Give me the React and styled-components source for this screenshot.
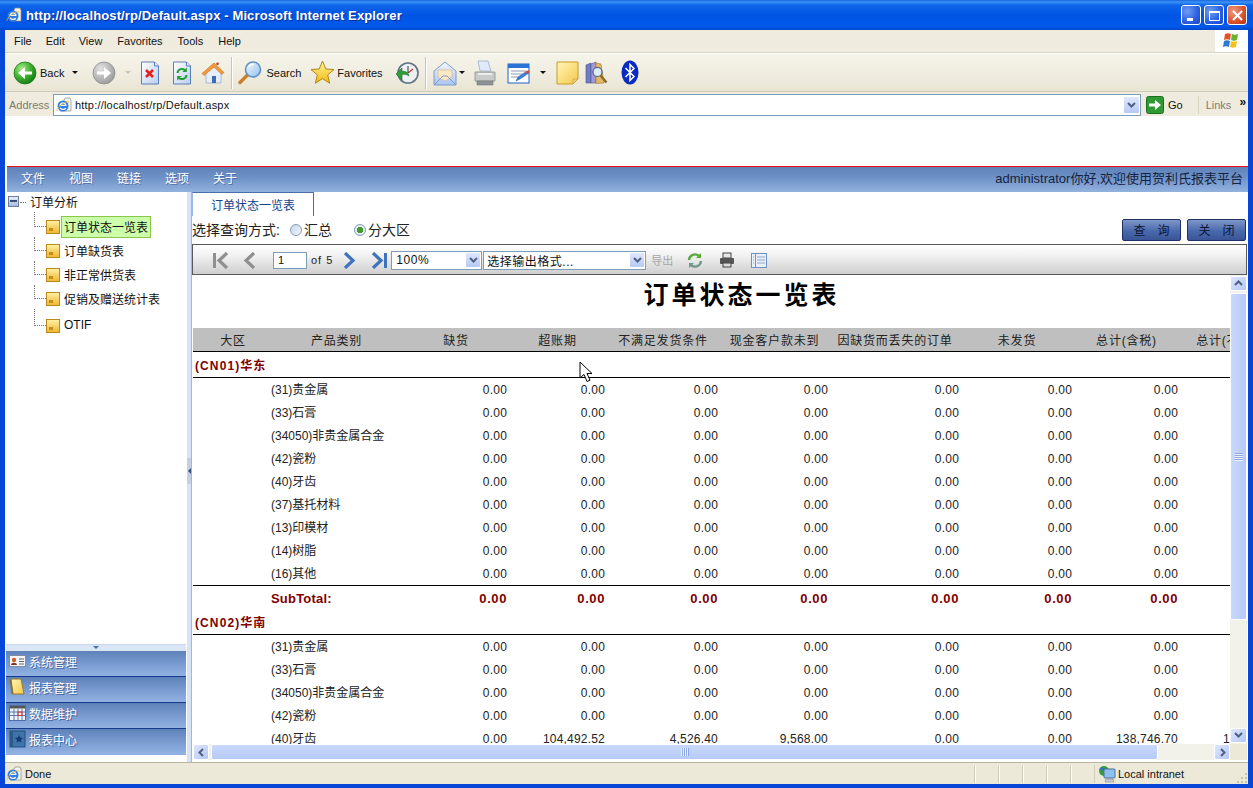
import React from "react";
import styled, { createGlobalStyle } from "styled-components";

const UI_FONT = `"Liberation Sans", "Noto Sans CJK SC", sans-serif`;

const GlobalStyle = createGlobalStyle`
  html, body {
    margin: 0;
    padding: 0;
    overflow: hidden;
    background: #0846d8;
    font-family: ${UI_FONT};
  }
`;

const Window = styled.div`
  width: 1253px;
  height: 788px;
  display: flex;
  flex-direction: column;
  background: #0846d8;
  position: relative;
  overflow: hidden;
`;

const TitleBar = styled.div`
  height: 30px;
  flex: none;
  display: flex;
  align-items: center;
  padding: 0 6px 0 6px;
  background: linear-gradient(#1a62dc 0, #3b93f8 2px, #0f66ea 5px, #0054e3 50%, #0058ea 88%, #0048c8 100%);
`;

const TitleText = styled.div`
  margin-left: 4px;
  flex: 1;
  color: #fff;
  font-size: 13px;
  font-weight: 700;
  letter-spacing: 0.12px;
  text-shadow: 1px 1px 0 #0b2f96;
`;

const CaptionButton = styled.div`
  width: 18px;
  height: 18px;
  margin-left: 3px;
  border: 1px solid #fff;
  border-radius: 3px;
  box-sizing: content-box;
  background: ${(p) =>
    p.$close
      ? "radial-gradient(circle at 30% 30%, #ee9a80, #d8512c 60%, #b83212)"
      : "radial-gradient(circle at 30% 30%, #6f9cf2, #2a5fe0 60%, #1a48c8)"};
  display: flex;
  align-items: center;
  justify-content: center;
  position: relative;
`;

const Chrome = styled.div`
  flex: 1;
  min-height: 0;
  margin: 0 5px 4px;
  display: flex;
  flex-direction: column;
  background: #ece9d8;
`;

const MenuBar = styled.div`
  height: 23px;
  flex: none;
  display: flex;
  align-items: center;
  background: #efecdf;
  border-bottom: 1px solid #d8d4c0;
  box-sizing: border-box;
`;

const MenuItem = styled.span`
  font-size: 11px;
  color: #111;
  margin-left: ${(p) => p.$ml}px;
`;

const FlagBox = styled.div`
  margin-left: auto;
  width: 33px;
  height: 22px;
  background: #fff;
  display: flex;
  align-items: center;
  justify-content: center;
`;

const ToolBar = styled.div`
  height: 39px;
  flex: none;
  display: flex;
  align-items: center;
  padding-left: 8px;
  box-sizing: border-box;
  background: linear-gradient(#f6f4ea, #efecdf 60%, #e8e5d4);
  border-top: 1px solid #fff;
  border-bottom: 1px solid #cfcbb6;
`;

const ToolIcon = styled.span`
  display: inline-flex;
  margin-left: ${(p) => p.$ml || 0}px;
  flex: none;
`;

const ToolLabel = styled.span`
  font-size: 11px;
  color: #111;
  margin-left: ${(p) => p.$ml || 3}px;
  flex: none;
`;

const Caret = styled.span`
  width: 0;
  height: 0;
  flex: none;
  margin-left: ${(p) => p.$ml || 3}px;
  border-left: 3px solid transparent;
  border-right: 3px solid transparent;
  border-top: 3px solid ${(p) => (p.$dim ? "#c4c1b0" : "#111")};
`;

const ToolSeparator = styled.span`
  width: 1px;
  height: 32px;
  flex: none;
  background: #c9c5b0;
  box-shadow: 1px 0 0 #fff;
  margin-left: ${(p) => p.$ml || 0}px;
`;

const AddressBar = styled.div`
  height: 24px;
  flex: none;
  display: flex;
  align-items: flex-end;
  background: #efecdf;
  box-sizing: border-box;
`;

const AddressLabel = styled.span`
  font-size: 11px;
  color: #7d7b6e;
  margin-left: 4px;
  width: 44px;
  flex: none;
  align-self: center;
  padding-top: 1px;
`;

const AddressInput = styled.div`
  width: 1088px;
  height: 22px;
  flex: none;
  box-sizing: border-box;
  border: 1px solid #7f9db9;
  background: #fff;
  display: flex;
  align-items: center;
  padding-left: 2px;
  font-size: 11px;
  letter-spacing: 0.2px;
  color: #111;
  gap: 3px;
`;

const ComboButton = styled.span`
  margin-left: auto;
  width: ${(p) => p.$w || 17}px;
  height: ${(p) => p.$h || 18}px;
  flex: none;
  background: linear-gradient(#dfe8fb, #b6c9f4);
  border: 1px solid #fff;
  box-sizing: border-box;
  border-radius: 2px;
  display: flex;
  align-items: center;
  justify-content: center;
`;

const AddressGo = styled.span`
  display: flex;
  align-items: center;
  height: 22px;
  flex: none;
  margin-left: 5px;
`;

const GoLabel = styled.span`
  font-size: 11px;
  color: #111;
  margin-left: 4px;
`;

const LinksLabel = styled.span`
  font-size: 11px;
  color: #7d7b6e;
  margin-left: 15px;
  padding-left: 7px;
  border-left: 1px solid #d8d4c0;
  line-height: 18px;
`;

const Chevrons = styled.span`
  font-size: 12px;
  font-weight: 700;
  color: #111;
  margin: -6px 0 0 8px;
`;

const Page = styled.div`
  flex: 1;
  min-height: 0;
  display: flex;
  flex-direction: column;
  background: #fff;
`;

const Banner = styled.div`
  height: 51px;
  flex: none;
  background: #fff;
  border-bottom: 1px solid #f01010;
  margin-left: 2px;
  box-sizing: border-box;
`;

const NavBar = styled.div`
  height: 25px;
  flex: none;
  margin-left: 2px;
  padding: 0 5px 5px 14px;
  box-sizing: border-box;
  display: flex;
  align-items: center;
  gap: 24px;
  background: linear-gradient(#5f82b9, #6f93c8 45%, #92b2de);
`;

const NavItem = styled.span`
  color: #fff;
  font-size: 12px;
  text-shadow: 1px 1px 0 #4f6fa4;
`;

const Welcome = styled.span`
  margin-left: auto;
  font-size: 13px;
  color: #16233f;
`;

const Main = styled.div`
  flex: 1;
  min-height: 0;
  display: flex;
`;

const Sidebar = styled.div`
  width: 182px;
  flex: none;
  padding: 0 1px;
  box-sizing: border-box;
  display: flex;
  flex-direction: column;
  padding-bottom: 7px;
`;

const Tree = styled.div`
  flex: 1;
  min-height: 0;
`;

const TreeRoot = styled.div`
  height: 20px;
  display: flex;
  align-items: center;
  padding-left: 2px;
  padding-bottom: 2px;
  box-sizing: border-box;
  font-size: 12px;
  color: #111;
`;

const MinusBox = styled.span`
  width: 11px;
  height: 11px;
  flex: none;
  box-sizing: border-box;
  border: 1px solid #6d7f9f;
  background: linear-gradient(#e6edf8, #a8bcdc);
  display: flex;
  align-items: center;
  justify-content: center;
  margin-right: 11px;
  position: relative;
  &::before {
    content: "";
    width: 7px;
    height: 2px;
    background: #3a4f78;
  }
  &::after {
    content: "";
    position: absolute;
    left: 11px;
    top: 5px;
    width: 6px;
    border-top: 1px dotted #777;
  }
`;

const TreeChildren = styled.div`
  padding-top: 3px;
`;

const TreeRow = styled.div`
  height: 24px;
  margin-top: ${(p) => p.$mt || 0}px;
  padding-left: 40px;
  display: flex;
  align-items: center;
  position: relative;
  font-size: 12px;
  color: #111;
  &::before {
    content: "";
    position: absolute;
    left: 28px;
    top: ${(p) => (p.$first ? "-3px" : p.$mt ? "-5px" : "-2px")};
    bottom: 50%;
    width: 11px;
    border-left: 1px dotted #777;
    border-bottom: 1px dotted #777;
  }
`;

const TreeLabel = styled.span`
  margin-left: 1px;
  height: 22px;
  box-sizing: border-box;
  padding: 0 2px 2px;
  display: flex;
  align-items: center;
  border: 1px solid ${(p) => (p.$selected ? "#8ac64a" : "transparent")};
  background: ${(p) => (p.$selected ? "#ccffaa" : "transparent")};
`;

const Handle = styled.div`
  height: 7px;
  flex: none;
  background: #dbe6f5;
  border-top: 1px solid #c9d8ec;
  box-sizing: border-box;
  display: flex;
  justify-content: center;
  &::before {
    content: "";
    margin-top: 1px;
    width: 0;
    height: 0;
    border-left: 3px solid transparent;
    border-right: 3px solid transparent;
    border-top: 3px solid #4a6ea9;
  }
`;

const AccordionPanel = styled.div`
  height: 26px;
  flex: none;
  box-sizing: border-box;
  display: flex;
  align-items: center;
  gap: 2px;
  padding: 0 0 5px 3px;
  color: #fff;
  font-size: 12px;
  text-shadow: 1px 1px 0 #47659a;
  background: linear-gradient(#5e81b9, #7b9dd2 55%, #92b2e2);
  border-bottom: 1px solid ${(p) => (p.$last ? "#8fb0e0" : "#153a8e")};
`;

const Splitter = styled.div`
  width: 5px;
  flex: none;
  background: #d5e3f5;
  display: flex;
  align-items: center;
  border-right: 1px solid #9ab8e0;
  box-sizing: border-box;
`;

const SplitterGrip = styled.div`
  width: 4px;
  height: 26px;
  margin-top: -12px;
  background: #c3cfe2;
  display: flex;
  align-items: center;
  justify-content: center;
  &::before {
    content: "";
    border-top: 3px solid transparent;
    border-bottom: 3px solid transparent;
    border-right: 3px solid #334d80;
  }
`;

const Content = styled.div`
  flex: 1;
  min-width: 0;
  display: flex;
  flex-direction: column;
`;

const TabStrip = styled.div`
  height: 24px;
  flex: none;
  display: flex;
`;

const Tab = styled.div`
  width: 122px;
  box-sizing: border-box;
  border: 1px solid #4a6ea9;
  border-left-color: #9ab8e0;
  border-bottom: none;
  display: flex;
  align-items: center;
  justify-content: center;
  font-size: 12px;
  color: #15428b;
`;

const QueryRow = styled.div`
  height: 28px;
  flex: none;
  display: flex;
  align-items: center;
  padding-right: 2px;
`;

const QueryText = styled.span`
  font-size: 14px;
  color: #222;
  padding-bottom: 3px;
  flex: none;
`;

const Radio = styled.span`
  width: 12px;
  height: 12px;
  flex: none;
  box-sizing: border-box;
  margin-left: ${(p) => p.$ml}px;
  margin-right: 2px;
  border-radius: 50%;
  border: 1px solid #7f9db9;
  background: ${(p) =>
    p.$checked
      ? "radial-gradient(circle, #3f9a2c 0 3px, #e8eef6 3.5px)"
      : "linear-gradient(135deg, #c8d6ea, #f4f6fb)"};
`;

const ActionButton = styled.div`
  width: 59px;
  height: 22px;
  margin-left: ${(p) => p.$ml}px;
  flex: none;
  box-sizing: border-box;
  padding-bottom: 2px;
  border: 1px solid #1f2f68;
  border-radius: 2px;
  background: linear-gradient(#7f97c9, #4a69ad 55%, #3a5597);
  display: flex;
  align-items: center;
  justify-content: center;
  font-size: 12px;
  color: #0b1533;
`;

const ReportToolbar = styled.div`
  height: 31px;
  flex: none;
  box-sizing: border-box;
  margin-right: 1px;
  border: 1px solid #5a5a5a;
  background: linear-gradient(#fff, #f2f2f2 35%, #cfcfcf);
  display: flex;
  align-items: center;
  padding: 1px 0 0 19px;
`;

const PageInput = styled.div`
  width: 34px;
  height: 17px;
  margin-left: ${(p) => p.$ml}px;
  flex: none;
  box-sizing: border-box;
  border: 1px solid #7f9db9;
  background: #fff;
  font-size: 11px;
  line-height: 15px;
  padding-left: 4px;
  color: #111;
`;

const PageOf = styled.span`
  font-size: 11px;
  letter-spacing: 1px;
  color: #222;
  margin-left: 4px;
  flex: none;
`;

const SelectBox = styled.div`
  width: ${(p) => p.$w}px;
  height: 19px;
  margin-left: ${(p) => p.$ml || 0}px;
  flex: none;
  box-sizing: border-box;
  border: 1px solid #7f9db9;
  background: #fff;
  display: flex;
  align-items: center;
  padding-left: ${(p) => p.$pad || 4}px;
  font-size: 12px;
  letter-spacing: 0.5px;
  color: #111;
`;

const ExportLabel = styled.span`
  font-size: 11px;
  color: #a5a5a5;
  margin-left: 5px;
  flex: none;
`;

const ReportFrame = styled.div`
  flex: 1;
  min-height: 0;
  margin: 0 1px 2px 1px;
  display: grid;
  grid-template-columns: 1fr 17px;
  grid-template-rows: 1fr 16px;
`;

const Viewport = styled.div`
  overflow: hidden;
  min-width: 0;
  min-height: 0;
`;

const ReportTitle = styled.div`
  height: 53px;
  width: 1037px;
  text-align: center;
  padding-left: 60px;
  box-sizing: border-box;
  font-size: 25px;
  font-weight: 700;
  letter-spacing: 3px;
  color: #000;
`;

const GRID = "78px 134px 105px 98px 113px 110px 131px 113px 106px 107px";

const HeaderRow = styled.div`
  display: grid;
  grid-template-columns: ${GRID};
  height: 24px;
  padding-bottom: 1px;
  align-items: center;
  background: #bfbfbf;
  border-bottom: 1px solid #000;
  box-sizing: border-box;
  width: 1037px;
  overflow: hidden;
`;

const HeaderCell = styled.div`
  text-align: center;
  padding-right: 3px;
  font-size: 12px;
  letter-spacing: 0.8px;
  color: #222;
  white-space: nowrap;
  &:first-child {
    padding-left: 5px;
  }
`;

const GroupRow = styled.div`
  height: ${(p) => p.$h}px;
  box-sizing: border-box;
  width: 1037px;
  padding: 0 0 ${(p) => p.$pb || 0}px 2px;
  border-bottom: 1px solid #000;
  display: flex;
  align-items: center;
  font-size: 12px;
  font-weight: 700;
  letter-spacing: 1.1px;
  color: #800000;
`;

const DataRow = styled.div`
  display: grid;
  grid-template-columns: ${GRID};
  height: ${(p) => p.$h || 23}px;
  align-items: center;
  width: 1150px;
  ${(p) => p.$total && "font-weight: 700; color: #800000; letter-spacing: 0.6px;"}
  ${(p) => p.$total && "font-size: 13px;"}
  ${(p) => !p.$total && "font-size: 12px; color: #222; letter-spacing: 0.2px;"}
`;

const NameCell = styled.div`
  grid-column: 2;
  white-space: nowrap;
  padding-bottom: ${(p) => (p.$total ? "0" : "2px")};
  letter-spacing: ${(p) => (p.$total ? "0.2px" : "0")};
`;

const NumCell = styled.div`
  text-align: right;
  padding-right: 3px;
  white-space: nowrap;
`;

const TotalRule = styled.div`
  width: 1037px;
  border-top: 1px solid #000;
`;

const VScroll = styled.div`
  background: #f3f2ea;
  display: flex;
  flex-direction: column;
  padding: 1px 0;
`;

const HScroll = styled.div`
  background: #f3f2ea;
  display: flex;
  align-items: stretch;
`;

const ScrollBtn = styled.div`
  flex: none;
  width: ${(p) => (p.$horizontal ? "16px" : "100%")};
  height: ${(p) => (p.$horizontal ? "100%" : "15px")};
  box-sizing: border-box;
  border: 1px solid #fff;
  border-radius: 2px;
  background: linear-gradient(135deg, #dde6fc, #b5c8f4);
  display: flex;
  align-items: center;
  justify-content: center;
`;

const VThumb = styled.div`
  height: 327px;
  margin-top: 2px;
  flex: none;
  box-sizing: border-box;
  border: 1px solid #fff;
  border-radius: 2px;
  background: linear-gradient(90deg, #c9d8fb, #b7cbf7);
  display: flex;
  align-items: center;
  justify-content: center;
`;

const HThumb = styled.div`
  width: 947px;
  margin-left: 2px;
  flex: none;
  box-sizing: border-box;
  border: 1px solid #fff;
  border-radius: 2px;
  background: linear-gradient(#c9d8fb, #b7cbf7);
  display: flex;
  align-items: center;
  justify-content: center;
`;

const GripLines = styled.span`
  width: 8px;
  height: 8px;
  background: repeating-linear-gradient(
    ${(p) => (p.$horizontal ? "90deg" : "0deg")},
    #eef3fe 0 1px,
    #8ca7e0 1px 2px
  );
`;

const ScrollSpacer = styled.div`
  flex: 1;
`;

const ScrollCorner = styled.div`
  background: #ece9d8;
`;

const StatusBar = styled.div`
  height: 22px;
  flex: none;
  display: flex;
  align-items: center;
  box-sizing: border-box;
  border-top: 1px solid #b8b4a0;
  background: #ece9d8;
  font-size: 11px;
  color: #111;
  padding-left: 1px;
`;

const StatusDone = styled.span`
  margin-left: 3px;
  width: 949px;
  flex: none;
`;

const StatusCell = styled.span`
  width: 24px;
  height: 18px;
  flex: none;
  box-sizing: border-box;
  border-left: 1px solid #cfcbb6;
  box-shadow: inset 1px 0 0 #fff;
`;

const StatusZone = styled.span`
  flex: 1;
  display: flex;
  align-items: center;
  gap: 2px;
  height: 18px;
  padding-left: 3px;
  border-left: 1px solid #cfcbb6;
`;

const SizeGrip = styled.svg`
  margin-left: auto;
  align-self: flex-end;
`;

const Cursor = styled.svg`
  position: absolute;
  left: 579px;
  top: 361px;
`;

/* icons */
const Defs = () => (
  <svg width="0" height="0" style={{ position: "absolute" }}>
    <defs>
      <radialGradient id="greenBall" cx="35%" cy="30%" r="75%">
        <stop offset="0" stopColor="#a8ea8c" />
        <stop offset="0.55" stopColor="#3fb02e" />
        <stop offset="1" stopColor="#117a14" />
      </radialGradient>
      <radialGradient id="grayBall" cx="35%" cy="30%" r="75%">
        <stop offset="0" stopColor="#e2e2e2" />
        <stop offset="1" stopColor="#9a9a9a" />
      </radialGradient>
      <linearGradient id="docFill" x1="0" y1="0" x2="1" y2="1">
        <stop offset="0" stopColor="#fff" />
        <stop offset="1" stopColor="#b9cdf0" />
      </linearGradient>
      <linearGradient id="noteFill" x1="0" y1="0" x2="1" y2="1">
        <stop offset="0" stopColor="#fff6b8" />
        <stop offset="1" stopColor="#f5c94a" />
      </linearGradient>
      <linearGradient id="folderFill" x1="0" y1="0" x2="0" y2="1">
        <stop offset="0" stopColor="#fff2a8" />
        <stop offset="1" stopColor="#eeb52a" />
      </linearGradient>
      <linearGradient id="starFill" x1="0" y1="0" x2="0" y2="1">
        <stop offset="0" stopColor="#fff79a" />
        <stop offset="1" stopColor="#f2b90f" />
      </linearGradient>
      <linearGradient id="lensFill" x1="0" y1="0" x2="1" y2="1">
        <stop offset="0" stopColor="#f2f9ff" />
        <stop offset="1" stopColor="#8fc2ee" />
      </linearGradient>
      <linearGradient id="mailFill" x1="0" y1="0" x2="0" y2="1">
        <stop offset="0" stopColor="#f4f8ff" />
        <stop offset="1" stopColor="#a9c4f2" />
      </linearGradient>
    </defs>
  </svg>
);

const IeIcon = ({ size = 16 }) => (
  <svg width={size} height={size} viewBox="0 0 16 16">
    <path d="M9 1h5l1 2v11H4v-2z" fill="#f4f4f0" stroke="#8a8a80" strokeWidth="0.7" />
    <circle cx="7" cy="9" r="5.5" fill="#2f7fe0" />
    <path d="M3.6 8.4h6.8M4 10.8c1.4 2 4.4 2 5.8.4" stroke="#fff" strokeWidth="1.4" fill="none" />
    <path d="M4.2 8c.6-2.6 4.8-3 5.8 0" stroke="#fff" strokeWidth="1.2" fill="none" />
    <path d="M1 14c-.6-1.6 3-6 8-8.6 2.6-1.2 4-1 4 .2" stroke="#f2b234" strokeWidth="0.8" fill="none" />
  </svg>
);

const BallArrow = ({ forward }) => (
  <svg width="24" height="24" viewBox="0 0 24 24">
    <circle cx="12" cy="12" r="11" fill={forward ? "url(#grayBall)" : "url(#greenBall)"} stroke={forward ? "#8c8c8c" : "#1a7a1a"} strokeWidth="0.8" />
    <path
      d={forward ? "M5 10.4h7V6l7 6-7 6v-4.4H5z" : "M19 10.4h-7V6l-7 6 7 6v-4.4h7z"}
      fill="#fff"
    />
  </svg>
);

const DocBase = () => (
  <>
    <path d="M1.5 1h13l4 4v18h-17z" fill="url(#docFill)" stroke="#5b7fb8" />
    <path d="M14.5 1v4h4" fill="#dfe8f8" stroke="#5b7fb8" />
  </>
);

const StopIcon = () => (
  <svg width="20" height="24" viewBox="0 0 20 24">
    <DocBase />
    <path d="M6 9l7 7M13 9l-7 7" stroke="#e3201a" strokeWidth="2.6" />
  </svg>
);

const RefreshIcon = () => (
  <svg width="20" height="24" viewBox="0 0 20 24">
    <DocBase />
    <path d="M5.5 12a4.5 4.5 0 0 1 7.8-2.6" stroke="#1f9e2c" strokeWidth="2" fill="none" />
    <path d="M14.8 6.5v4.6h-4.4z" fill="#1f9e2c" />
    <path d="M14.5 14a4.5 4.5 0 0 1-7.8 2.6" stroke="#1f9e2c" strokeWidth="2" fill="none" />
    <path d="M5.2 19.5v-4.6h4.4z" fill="#1f9e2c" />
  </svg>
);

const HomeIcon = () => (
  <svg width="24" height="24" viewBox="0 0 24 24">
    <path d="M5 11v11h15V11l-7-6z" fill="#e6eef9" stroke="#8aa0c4" strokeWidth="0.7" />
    <rect x="11" y="15" width="4" height="7" fill="#3f6cb0" />
    <path d="M1 12.5L13 2l10 9.5-2 2-8-7.5-10 8.5z" fill="#f39a3a" stroke="#c96d1a" strokeWidth="0.6" />
    <circle cx="16.5" cy="2.8" r="1.4" fill="#c94a2a" />
  </svg>
);

const SearchIcon = () => (
  <svg width="26" height="26" viewBox="0 0 26 26">
    <path d="M10.5 15L3 22.5" stroke="#c97f2a" strokeWidth="3.4" strokeLinecap="round" />
    <circle cx="16" cy="9.5" r="7.5" fill="url(#lensFill)" stroke="#5f8fc4" strokeWidth="1.6" />
    <path d="M12 7c1-2 3-3 5-3" stroke="#fff" strokeWidth="1.4" fill="none" />
  </svg>
);

const StarIcon = () => (
  <svg width="25" height="25" viewBox="0 0 25 25">
    <path d="M12.5 1l3.3 8 8.2.6-6.3 5.3 2 8.3-7.2-4.5-7.2 4.5 2-8.3L1 9.6l8.2-.6z" fill="url(#starFill)" stroke="#a87a10" strokeWidth="0.9" />
  </svg>
);

const HistoryIcon = () => (
  <svg width="24" height="24" viewBox="0 0 24 24">
    <circle cx="13" cy="12" r="10" fill="#eef1f4" stroke="#5e7280" strokeWidth="1.6" />
    <path d="M13 12l5-4" stroke="#c23b2a" strokeWidth="1.2" />
    <path d="M13 12V5" stroke="#334" strokeWidth="1" />
    <path d="M1 13l6-6v3.400c3-.6 6 .6 7 4.600-2-1.600-4.600-2-7-1.400V19z" fill="#2e9e36" stroke="#1a6e22" strokeWidth="0.6" />
  </svg>
);

const MailIcon = () => (
  <svg width="24" height="26" viewBox="0 0 24 26">
    <path d="M1 11L12 2l11 9v14H1z" fill="url(#mailFill)" stroke="#7e9ac8" />
    <path d="M5 10h14v7l-7 4-7-4z" fill="#fde9c4" stroke="#d2b078" strokeWidth="0.6" />
    <path d="M1 25l9-9h4l9 9" fill="none" stroke="#7e9ac8" />
  </svg>
);

const PrintIcon = () => (
  <svg width="24" height="26" viewBox="0 0 24 26">
    <path d="M5 1h10l3 10H7z" fill="#dfeafa" stroke="#97a6bc" strokeWidth="0.7" />
    <path d="M2 12h20v9H2z" fill="#c9cbca" stroke="#7e8284" strokeWidth="0.7" />
    <path d="M4 21h16v4H4z" fill="#8e9294" stroke="#6b6f71" strokeWidth="0.5" />
    <path d="M5 14h14" stroke="#f4f4f4" strokeWidth="1.6" />
  </svg>
);

const EditIcon = () => (
  <svg width="24" height="24" viewBox="0 0 24 24">
    <rect x="1" y="3" width="21" height="19" fill="#fff" stroke="#1f63c4" />
    <rect x="1" y="3" width="21" height="4" fill="#2a74d6" />
    <path d="M4 10h15M4 13h11M4 16h8" stroke="#8c9bb3" />
    <path d="M9 20l2-4 9-6 2 2-9 6z" fill="#3f7fd8" stroke="#1d4f9c" strokeWidth="0.5" />
    <path d="M18.500 11l3-2 1 2-2.500 2z" fill="#e2462a" />
  </svg>
);

const NoteIcon = () => (
  <svg width="24" height="24" viewBox="0 0 24 24">
    <path d="M2 1h21v17l-5 5H2z" fill="url(#noteFill)" stroke="#c99a22" />
    <path d="M18 23v-5h5z" fill="#e9cf8a" stroke="#c99a22" strokeWidth="0.6" />
  </svg>
);

const ResearchIcon = () => (
  <svg width="24" height="24" viewBox="0 0 24 24">
    <path d="M1 4l5-2v20H1z" fill="#6f7fc4" stroke="#46508e" strokeWidth="0.6" />
    <path d="M6 3l5-2v21H6z" fill="#a19ad6" stroke="#5a5296" strokeWidth="0.6" />
    <path d="M11 2l5 1 3 19-8 .5z" fill="#e3b866" stroke="#9a7a35" strokeWidth="0.6" />
    <circle cx="12.500" cy="11" r="4.500" fill="#dcecfa" stroke="#4a5f80" strokeWidth="1.2" />
    <path d="M15.500 14.500l6 7" stroke="#8a6a22" strokeWidth="2.4" />
  </svg>
);

const BluetoothIcon = () => (
  <svg width="18" height="25" viewBox="0 0 18 25">
    <ellipse cx="9" cy="12.500" rx="8.500" ry="12" fill="#0a2bc0" />
    <path d="M4.500 8l8.500 8.500L9 20.500v-16l4 4L4.500 17" fill="none" stroke="#fff" strokeWidth="1.5" />
  </svg>
);

const WindowsFlag = () => (
  <svg width="20" height="20" viewBox="0 0 20 20">
    <path d="M3 3c2-1 4-1 6 0l-1 6c-2-1-4-1-6 0z" fill="#e2532b" />
    <path d="M10 3c2 1 4 1 6 0l-1 6c-2 1-4 1-6 0z" fill="#65b32e" />
    <path d="M2 10c2-1 4-1 6 0l-1 6c-2-1-4-1-6 0z" fill="#2c79d6" />
    <path d="M9 10c2 1 4 1 6 0l-1 6c-2 1-4 1-6 0z" fill="#f3c21c" />
  </svg>
);

const Chevron = ({ dir = "down", color = "#4d6185" }) => {
  const d = {
    down: "M1 2l3.500 3.500L8 2",
    up: "M1 6l3.500-3.500L8 6",
    left: "M6 1L2.500 4.500 6 8",
    right: "M3 1l3.500 3.500L3 8",
  }[dir];
  return (
    <svg width="9" height="9" viewBox="0 0 9 9">
      <path d={d} fill="none" stroke={color} strokeWidth="2" />
    </svg>
  );
};

const GoIcon = () => (
  <svg width="18" height="18" viewBox="0 0 18 18">
    <rect x="0.5" y="0.5" width="17" height="17" rx="2" fill="#2f9a34" stroke="#1b6f21" />
    <path d="M3 7.500h6V4l6 5-6 5v-3.500H3z" fill="#fff" />
  </svg>
);

const TreeDoc = () => (
  <svg width="14" height="14" viewBox="0 0 14 14" style={{ flex: "none" }}>
    <rect x="0.5" y="0.5" width="13" height="13" fill="url(#folderFill)" stroke="#b8891e" />
    <path d="M3 8h4v3H3z" fill="#c98a1e" />
  </svg>
);

const FirstIcon = () => (
  <svg width="18" height="17" viewBox="0 0 18 17">
    <path d="M1 1h3v15H1z" fill="#8f8f8f" />
    <path d="M15 1l-8 7.500 8 7.500" fill="none" stroke="#8f8f8f" strokeWidth="3.200" />
  </svg>
);

const PrevIcon = () => (
  <svg width="13" height="17" viewBox="0 0 13 17">
    <path d="M11 1L3 8.500l8 7.500" fill="none" stroke="#8f8f8f" strokeWidth="3.200" />
  </svg>
);

const NextIcon = () => (
  <svg width="13" height="17" viewBox="0 0 13 17">
    <path d="M2 1l8 7.500L2 16" fill="none" stroke="#3f74bd" strokeWidth="3.200" />
  </svg>
);

const LastIcon = () => (
  <svg width="17" height="17" viewBox="0 0 17 17">
    <path d="M2 1l8 7.500L2 16" fill="none" stroke="#3f74bd" strokeWidth="3.200" />
    <path d="M13 1h3v15h-3z" fill="#3f74bd" />
  </svg>
);

const ReportRefresh = () => (
  <svg width="18" height="17" viewBox="0 0 18 17">
    <path d="M3 8a6 6 0 0 1 10-4" stroke="#5aa83c" strokeWidth="2.400" fill="none" />
    <path d="M15 1v5h-5z" fill="#5aa83c" />
    <path d="M15 9a6 6 0 0 1-10 4" stroke="#6f9a8c" strokeWidth="2.400" fill="none" />
    <path d="M3 16v-5h5z" fill="#6f9a8c" />
  </svg>
);

const ReportPrint = () => (
  <svg width="16" height="16" viewBox="0 0 16 16">
    <rect x="4" y="1" width="8" height="5" fill="#e8e8e8" stroke="#444" />
    <rect x="1" y="6" width="14" height="6" rx="1" fill="#555" />
    <rect x="4" y="11" width="8" height="4" fill="#ddd" stroke="#444" />
  </svg>
);

const ReportList = () => (
  <svg width="16" height="15" viewBox="0 0 16 15">
    <rect x="0.500" y="0.500" width="15" height="14" fill="#eaf0fb" stroke="#6f93c8" />
    <path d="M4.500 1v13" stroke="#6f93c8" />
    <path d="M6 4h8M6 7h8M6 10h8M2 4h1M2 7h1M2 10h1" stroke="#8fa6c8" />
  </svg>
);

const ContactIcon = () => (
  <svg width="18" height="16" viewBox="0 0 18 16">
    <rect x="0.500" y="2.500" width="16" height="11" fill="#f4f6fa" stroke="#7f8ca4" />
    <circle cx="5" cy="7" r="2.200" fill="#c9622a" />
    <path d="M2 12c0-3 6-3 6 0z" fill="#7a3a1e" />
    <path d="M10 6h5M10 8.500h5M10 11h5" stroke="#667" />
  </svg>
);

const NotebookIcon = () => (
  <svg width="18" height="18" viewBox="0 0 18 18">
    <path d="M2 1h10l3 15H4z" fill="url(#noteFill)" stroke="#9a7a25" />
    <path d="M2 1l2 15H2.500L1 3z" fill="#8a6a20" />
  </svg>
);

const CalendarIcon = () => (
  <svg width="18" height="16" viewBox="0 0 18 16">
    <rect x="0.500" y="0.500" width="16" height="15" fill="#f0f4fb" stroke="#4f6fa8" />
    <rect x="1" y="1" width="15" height="2.500" fill="#555" />
    <path d="M1 7h15M1 10.500h15M5 4v11M9 4v11M13 4v11" stroke="#5a78b0" />
    <rect x="9" y="7" width="4" height="3.500" fill="none" stroke="#e23a2a" />
  </svg>
);

const StarBookIcon = () => (
  <svg width="18" height="18" viewBox="0 0 18 18">
    <rect x="1" y="1" width="15" height="16" fill="#3f74a8" stroke="#23507e" />
    <path d="M1 1h3v16H1z" fill="#2a5a88" />
    <path d="M10 5l1.200 2.600 2.800.3-2.100 1.900.6 2.800-2.500-1.400-2.500 1.400.6-2.800-2.100-1.900 2.800-.3z" fill="#123a72" />
  </svg>
);

const IntranetIcon = () => (
  <svg width="18" height="18" viewBox="0 0 18 18">
    <circle cx="6" cy="6" r="5" fill="#3a9a44" />
    <path d="M2 4c2-1 4 0 5 2" stroke="#2c6fd0" strokeWidth="2" fill="none" />
    <rect x="6" y="4" width="11" height="9" rx="1" fill="#8fc0ee" stroke="#44709c" />
    <path d="M8 14h7l1 3H7z" fill="#c8ccd2" stroke="#7a7f88" strokeWidth="0.5" />
  </svg>
);

/* report data */
const COLUMNS = ["大区", "产品类别", "缺货", "超账期", "不满足发货条件", "现金客户款未到", "因缺货而丢失的订单", "未发货", "总计(含税)", "总计(不含税)"];
const PRODUCTS = ["(31)贵金属", "(33)石膏", "(34050)非贵金属合金", "(42)瓷粉", "(40)牙齿", "(37)基托材料", "(13)印模材", "(14)树脂", "(16)其他"];
const ZEROS = ["0.00", "0.00", "0.00", "0.00", "0.00", "0.00", "0.00", ""];
const SOUTH_ROWS = [
  { name: "(31)贵金属", values: ZEROS },
  { name: "(33)石膏", values: ZEROS },
  { name: "(34050)非贵金属合金", values: ZEROS },
  { name: "(42)瓷粉", values: ZEROS },
  {
    name: "(40)牙齿",
    values: ["0.00", "104,492.52", "4,526.40", "9,568.00", "0.00", "0.00", "138,746.70", "138,746.70"],
  },
];

const Numbers = ({ values }) =>
  values.map((v, i) => <NumCell key={i}>{v}</NumCell>);

const TREE_ITEMS = ["订单状态一览表", "订单缺货表", "非正常供货表", "促销及赠送统计表"];

export default function App() {
  return (
    <Window>
      <GlobalStyle />
      <Defs />
      <TitleBar>
        <IeIcon />
        <TitleText>http://localhost/rp/Default.aspx - Microsoft Internet Explorer</TitleText>
        <CaptionButton>
          <svg width="9" height="14" viewBox="0 0 9 14"><rect x="0" y="10" width="6" height="3" fill="#fff" /></svg>
        </CaptionButton>
        <CaptionButton>
          <svg width="11" height="11" viewBox="0 0 11 11"><path d="M0.500 2.500h10v8h-10z" fill="none" stroke="#fff" /><path d="M0 1h11v2H0z" fill="#fff" /></svg>
        </CaptionButton>
        <CaptionButton $close>
          <svg width="11" height="11" viewBox="0 0 11 11"><path d="M1 1l9 9M10 1l-9 9" stroke="#fff" strokeWidth="2" /></svg>
        </CaptionButton>
      </TitleBar>
      <Chrome>
        <MenuBar>
          <MenuItem $ml={9}>File</MenuItem>
          <MenuItem $ml={14}>Edit</MenuItem>
          <MenuItem $ml={14}>View</MenuItem>
          <MenuItem $ml={15}>Favorites</MenuItem>
          <MenuItem $ml={15}>Tools</MenuItem>
          <MenuItem $ml={15}>Help</MenuItem>
          <FlagBox><WindowsFlag /></FlagBox>
        </MenuBar>
        <ToolBar>
          <ToolIcon><BallArrow /></ToolIcon>
          <ToolLabel>Back</ToolLabel>
          <Caret $ml={8} />
          <ToolIcon $ml={14}><BallArrow forward /></ToolIcon>
          <Caret $ml={9} $dim />
          <ToolIcon $ml={9}><StopIcon /></ToolIcon>
          <ToolIcon $ml={12}><RefreshIcon /></ToolIcon>
          <ToolIcon $ml={9}><HomeIcon /></ToolIcon>
          <ToolSeparator $ml={6} />
          <ToolIcon $ml={5}><SearchIcon /></ToolIcon>
          <ToolLabel $ml={3}>Search</ToolLabel>
          <ToolIcon $ml={9}><StarIcon /></ToolIcon>
          <ToolLabel $ml={2}>Favorites</ToolLabel>
          <ToolIcon $ml={12}><HistoryIcon /></ToolIcon>
          <ToolSeparator $ml={6} />
          <ToolIcon $ml={7}><MailIcon /></ToolIcon>
          <Caret $ml={2} />
          <ToolIcon $ml={8}><PrintIcon /></ToolIcon>
          <ToolIcon $ml={10}><EditIcon /></ToolIcon>
          <Caret $ml={9} />
          <ToolIcon $ml={9}><NoteIcon /></ToolIcon>
          <ToolIcon $ml={6}><ResearchIcon /></ToolIcon>
          <ToolIcon $ml={12}><BluetoothIcon /></ToolIcon>
        </ToolBar>
        <AddressBar>
          <AddressLabel>Address</AddressLabel>
          <AddressInput>
            <IeIcon />
            http://localhost/rp/Default.aspx
            <ComboButton><Chevron /></ComboButton>
          </AddressInput>
          <AddressGo>
            <GoIcon />
            <GoLabel>Go</GoLabel>
            <LinksLabel>Links</LinksLabel>
            <Chevrons>»</Chevrons>
          </AddressGo>
        </AddressBar>
        <Page>
          <Banner />
          <NavBar>
            <NavItem>文件</NavItem>
            <NavItem>视图</NavItem>
            <NavItem>链接</NavItem>
            <NavItem>选项</NavItem>
            <NavItem>关于</NavItem>
            <Welcome>administrator你好,欢迎使用贺利氏报表平台</Welcome>
          </NavBar>
          <Main>
            <Sidebar>
              <Tree>
                <TreeRoot><MinusBox />订单分析</TreeRoot>
                <TreeChildren>
                  {TREE_ITEMS.map((item, i) => (
                    <TreeRow key={item} $first={i === 0}>
                      <TreeDoc />
                      <TreeLabel $selected={i === 0}>{item}</TreeLabel>
                    </TreeRow>
                  ))}
                  <TreeRow $mt={3}>
                    <TreeDoc />
                    <TreeLabel>OTIF</TreeLabel>
                  </TreeRow>
                </TreeChildren>
              </Tree>
              <Handle />
              <AccordionPanel><ContactIcon />系统管理</AccordionPanel>
              <AccordionPanel><NotebookIcon />报表管理</AccordionPanel>
              <AccordionPanel><CalendarIcon />数据维护</AccordionPanel>
              <AccordionPanel $last><StarBookIcon />报表中心</AccordionPanel>
            </Sidebar>
            <Splitter><SplitterGrip /></Splitter>
            <Content>
              <TabStrip><Tab>订单状态一览表</Tab></TabStrip>
              <QueryRow>
                <QueryText>选择查询方式:</QueryText>
                <Radio $ml={10} /><QueryText>汇总</QueryText>
                <Radio $ml={22} $checked /><QueryText>分大区</QueryText>
                <ActionButton $ml={712}>查　询</ActionButton>
                <ActionButton $ml={6}>关　闭</ActionButton>
              </QueryRow>
              <ReportToolbar>
                <FirstIcon />
                <ToolIcon $ml={13}><PrevIcon /></ToolIcon>
                <PageInput $ml={17}>1</PageInput>
                <PageOf>of 5</PageOf>
                <ToolIcon $ml={10}><NextIcon /></ToolIcon>
                <ToolIcon $ml={15}><LastIcon /></ToolIcon>
                <SelectBox $w={91} $ml={3}>
                  100%
                  <ComboButton $w={16} $h={16}><Chevron /></ComboButton>
                </SelectBox>
                <SelectBox $w={163} $ml={1} $pad={3}>
                  选择输出格式...
                  <ComboButton $w={16} $h={16}><Chevron /></ComboButton>
                </SelectBox>
                <ExportLabel>导出</ExportLabel>
                <ToolIcon $ml={13}><ReportRefresh /></ToolIcon>
                <ToolIcon $ml={15}><ReportPrint /></ToolIcon>
                <ToolIcon $ml={16}><ReportList /></ToolIcon>
              </ReportToolbar>
              <ReportFrame>
                <Viewport>
                  <ReportTitle>订单状态一览表</ReportTitle>
                  <HeaderRow>
                    {COLUMNS.map((c) => <HeaderCell key={c}>{c}</HeaderCell>)}
                  </HeaderRow>
                  <GroupRow $h={26}>(CN01)华东</GroupRow>
                  {PRODUCTS.map((name) => (
                    <DataRow key={name}>
                      <NameCell>{name}</NameCell>
                      <Numbers values={ZEROS} />
                    </DataRow>
                  ))}
                  <TotalRule />
                  <DataRow $h={24} $total>
                    <NameCell $total>SubTotal:</NameCell>
                    <Numbers values={ZEROS} />
                  </DataRow>
                  <GroupRow $h={25} $pb={2}>(CN02)华南</GroupRow>
                  {SOUTH_ROWS.map((row) => (
                    <DataRow key={row.name}>
                      <NameCell>{row.name}</NameCell>
                      <Numbers values={row.values} />
                    </DataRow>
                  ))}
                </Viewport>
                <VScroll>
                  <ScrollBtn><Chevron dir="up" /></ScrollBtn>
                  <VThumb><GripLines /></VThumb>
                  <ScrollSpacer />
                  <ScrollBtn><Chevron /></ScrollBtn>
                </VScroll>
                <HScroll>
                  <ScrollBtn $horizontal><Chevron dir="left" /></ScrollBtn>
                  <HThumb><GripLines $horizontal /></HThumb>
                  <ScrollSpacer />
                  <ScrollBtn $horizontal><Chevron dir="right" /></ScrollBtn>
                </HScroll>
                <ScrollCorner />
              </ReportFrame>
            </Content>
          </Main>
        </Page>
        <StatusBar>
          <IeIcon />
          <StatusDone>Done</StatusDone>
          {[0, 1, 2, 3, 4].map((n) => <StatusCell key={n} />)}
          <StatusZone>
            <IntranetIcon />
            Local intranet
            <SizeGrip width="12" height="12" viewBox="0 0 12 12">
              <path d="M9 2h2v2H9zM5 6h2v2H5zM9 6h2v2H9zM1 10h2v2H1zM5 10h2v2H5zM9 10h2v2H9z" fill="#c4c0aa" />
            </SizeGrip>
          </StatusZone>
        </StatusBar>
      </Chrome>
      <Cursor width="14" height="22" viewBox="0 0 14 22">
        <path d="M1 1v16l4-3.500 3 7 3-1.300-3-6.700h5z" fill="#fff" stroke="#000" />
      </Cursor>
    </Window>
  );
}
